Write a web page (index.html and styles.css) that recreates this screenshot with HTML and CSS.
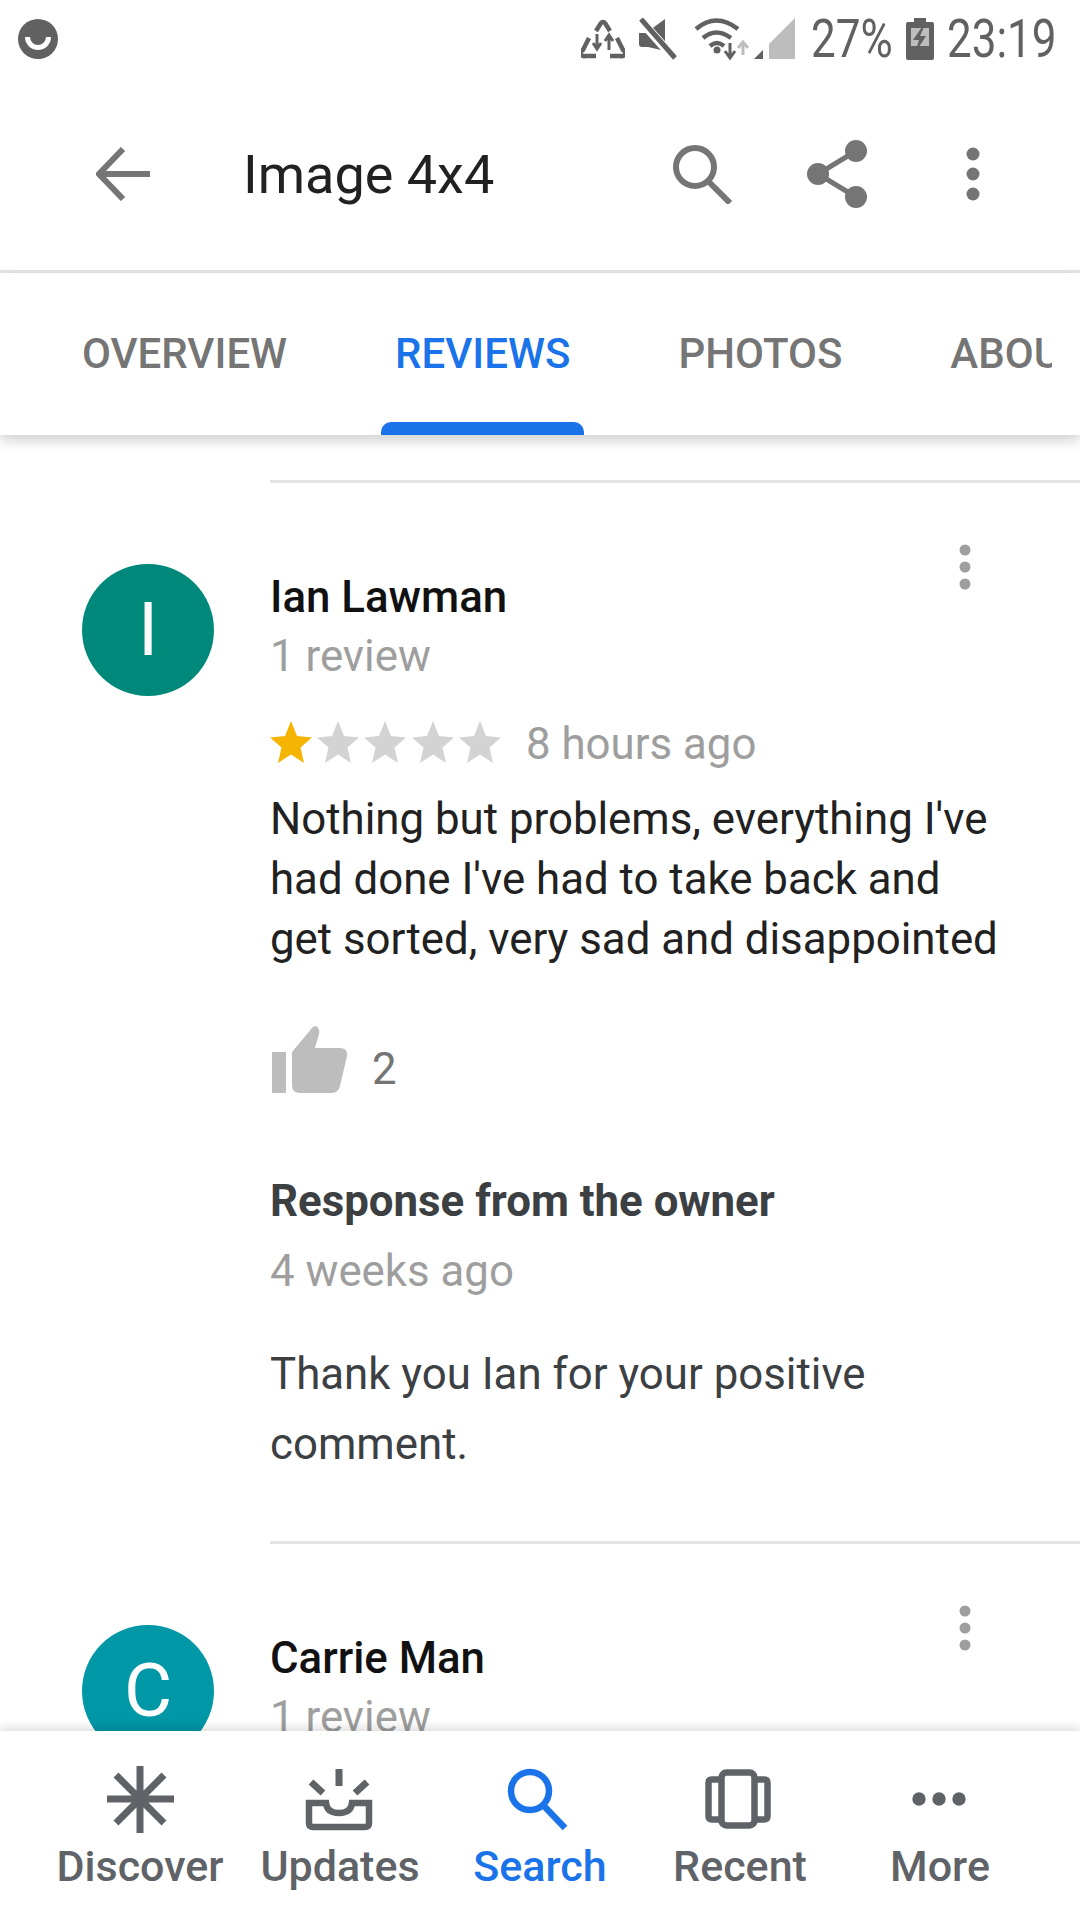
FILE: index.html
```html
<!DOCTYPE html>
<html lang="en">
  <head>
    <meta charset="UTF-8" />
    <title>Image 4x4 - Reviews</title>
    <link rel="stylesheet" href="styles.css">
  </head>
  <body>
    <div class="phone">
      <div class="status-bar">
        <svg class="status-app" width="44" height="44" viewBox="0 0 44 44">
          <circle cx="22" cy="22" r="20" fill="#616161"/>
          <path d="M9 20a13 13 0 0 0 26 0h-5a8 8 0 0 1-16 0z" fill="#fff"/>
        </svg>
        <div class="status-right">
          <svg class="s-recycle" width="44" height="42" viewBox="0 0 44 42" fill="none" stroke="#616161" stroke-width="4.500">
            <path d="M15 13l5-8a2.500 2.500 0 0 1 4 0l5 8"/>
            <path d="M8 20l-6 12a3 3 0 0 0 2 6h11"/>
            <path d="M36 20l6 12a3 3 0 0 1-2 6H29"/>
            <path d="M16 16v14M12 25l4 6 4-6M28 32V18M24 23l4-6 4 6" stroke-width="3"/>
          </svg>
          <svg class="s-mute" width="38" height="42" viewBox="0 0 38 42">
            <path d="M0 15h7L26 1v32L9 29H3q-3 0-3-3z" fill="#616161"/>
            <path d="M2 3l32 36" stroke="#fff" stroke-width="9"/>
            <path d="M2 1l34 39" stroke="#616161" stroke-width="5"/>
          </svg>
          <svg class="s-wifi" width="56" height="44" viewBox="0 0 56 44" fill="none" stroke="#616161" stroke-width="4.500">
            <path d="M2 12q20-17 42 0M9 21q13-11 28 0M16 29q7-6 14 0"/>
            <circle cx="23" cy="33" r="3.500" fill="#616161" stroke="none"/>
            <path d="M36 26v15M31 34l5 7 5-7" stroke-width="3"/>
            <path d="M49 38V25M44 31l5-6 5 6" stroke="#bdbdbd" stroke-width="3"/>
          </svg>
          <svg class="s-signal" width="42" height="42" viewBox="0 0 42 42">
            <path d="M0 41l9-9v9z" fill="#616161"/>
            <path d="M15 41V26L41 0v41z" fill="#bdbdbd"/>
          </svg>
          <span class="status-text pct">27%</span>
          <svg class="s-battery" width="28" height="42" viewBox="0 0 28 42">
            <path d="M8 0h12v4h6q2 0 2 2v34q0 2-2 2H2q-2 0-2-2V6q0-2 2-2h6z" fill="#616161"/>
            <rect x="5" y="10" width="18" height="18" fill="#bdbdbd"/>
            <path d="M16 9l-9 13h6l-4 13 11-17h-6l4-9z" fill="#616161"/>
          </svg>
          <span class="status-text clock">23:19</span>
        </div>
      </div>

      <div class="app-bar">
        <svg class="back-icon" width="54" height="54" viewBox="0 0 54 54" fill="none" stroke="#757575" stroke-width="6">
          <path d="M54 27H5M27 2L3 27l24 25"/>
        </svg>
        <div class="app-title">Image 4x4</div>
        <svg class="search-icon" width="60" height="60" viewBox="0 0 60 60" fill="none" stroke="#757575" stroke-width="6">
          <circle cx="23" cy="23" r="19"/>
          <path d="M36 37l22 22"/>
        </svg>
        <svg class="share-icon" width="60" height="68" viewBox="0 0 60 68" fill="#757575">
          <circle cx="49" cy="11" r="11"/>
          <circle cx="11" cy="34" r="11"/>
          <circle cx="49" cy="57" r="11"/>
          <path d="M49 11L11 34l38 23" fill="none" stroke="#757575" stroke-width="5"/>
        </svg>
        <svg class="more-icon" width="14" height="54" viewBox="0 0 14 54" fill="#757575">
          <circle cx="7" cy="7" r="6.500"/>
          <circle cx="7" cy="27" r="6.500"/>
          <circle cx="7" cy="47" r="6.500"/>
        </svg>
      </div>

      <div class="tabs">
        <div class="tab">OVERVIEW</div>
        <div class="tab active">REVIEWS</div>
        <div class="tab">PHOTOS</div>
        <div class="tab">ABOUT</div>
      </div>

      <div class="review-list">
        <div class="review first">
          <div class="avatar green">I</div>
          <div class="review-body">
            <div class="review-head">
              <div>
                <div class="reviewer">Ian Lawman</div>
                <div class="muted">1 review</div>
              </div>
              <svg class="kebab" width="12" height="46" viewBox="0 0 12 46" fill="#9e9e9e">
                <circle cx="6" cy="6" r="5.500"/>
                <circle cx="6" cy="23" r="5.500"/>
                <circle cx="6" cy="40" r="5.500"/>
              </svg>
            </div>
            <div class="rating">
              <svg class="stars" width="232" height="46" viewBox="0 0 232 46">
                <path d="M21 0l6 15 15 1.500-11.500 10 3.500 15.500-13-8.500-13 8.500 3.500-15.500L0 16.500 15 15z" fill="#f4b400"/>
                <path d="M68 0l6 15 15 1.500-11.500 10 3.500 15.500-13-8.500-13 8.500 3.500-15.500L47 16.500 62 15z" fill="#d3d3d3"/>
                <path d="M115 0l6 15 15 1.500-11.500 10 3.500 15.500-13-8.500-13 8.500 3.500-15.500L94 16.500 109 15z" fill="#d3d3d3"/>
                <path d="M163 0l6 15 15 1.500-11.500 10 3.500 15.500-13-8.500-13 8.500 3.500-15.500L142 16.500 157 15z" fill="#d3d3d3"/>
                <path d="M210 0l6 15 15 1.500-11.500 10 3.500 15.500-13-8.500-13 8.500 3.500-15.500L189 16.500 204 15z" fill="#d3d3d3"/>
              </svg>
              <span class="muted">8 hours ago</span>
            </div>
            <p class="review-text">Nothing but problems, everything I've had done I've had to take back and get sorted, very sad and disappointed</p>
            <div class="likes">
              <svg class="thumb" width="76" height="68" viewBox="0 0 76 68" fill="#bdbdbd">
                <rect x="0" y="27" width="14" height="41"/>
                <path d="M20 27L40 3q4-4 6 0 2 3 1 6l-4 14h25q8 0 7 8l-7 30q-2 7-8 7H28q-8 0-8-8z"/>
              </svg>
              <span class="like-count">2</span>
            </div>
            <div class="owner-title">Response from the owner</div>
            <div class="muted owner-date">4 weeks ago</div>
            <p class="owner-text">Thank you Ian for your positive comment.</p>
          </div>
        </div>

        <div class="review">
          <div class="avatar teal">C</div>
          <div class="review-body">
            <div class="review-head">
              <div>
                <div class="reviewer">Carrie Man</div>
                <div class="muted">1 review</div>
              </div>
              <svg class="kebab" width="12" height="46" viewBox="0 0 12 46" fill="#9e9e9e">
                <circle cx="6" cy="6" r="5.500"/>
                <circle cx="6" cy="23" r="5.500"/>
                <circle cx="6" cy="40" r="5.500"/>
              </svg>
            </div>
          </div>
        </div>
      </div>

      <div class="bottom-nav">
        <div class="nav-item">
          <svg width="70" height="70" viewBox="0 0 70 70" fill="none" stroke="#5f6368" stroke-width="7">
            <path d="M35 1v67M2 34h67M11 10l48 48M59 10L11 58"/>
          </svg>
          <span>Discover</span>
        </div>
        <div class="nav-item">
          <svg width="70" height="70" viewBox="0 0 70 70" fill="none" stroke="#5f6368" stroke-width="7">
            <path d="M34 4v17M6 17l12 11M62 17L50 28"/>
            <path d="M4 38h17q1 10 13 10t13-10h17v20q0 4-4 4H8q-4 0-4-4z" stroke-width="6.500"/>
          </svg>
          <span>Updates</span>
        </div>
        <div class="nav-item current">
          <svg width="70" height="70" viewBox="0 0 70 70" fill="none" stroke="#1a73e8" stroke-width="6.500">
            <circle cx="25" cy="26" r="19"/>
            <path d="M39 41l21 22"/>
          </svg>
          <span>Search</span>
        </div>
        <div class="nav-item">
          <svg width="70" height="70" viewBox="0 0 70 70" fill="none" stroke="#5f6368" stroke-width="6.500">
            <rect x="16.500" y="7.500" width="33" height="53" rx="5"/>
            <path d="M16 14.500H7q-3.500 0-3.500 3.500v33q0 3.500 3.500 3.500h9M50 14.500h9q3.500 0 3.500 3.500v33q0 3.500-3.500 3.500h-9"/>
          </svg>
          <span>Recent</span>
        </div>
        <div class="nav-item">
          <svg width="70" height="70" viewBox="0 0 70 70" fill="#5f6368">
            <circle cx="14" cy="34" r="6.700"/>
            <circle cx="34" cy="34" r="6.700"/>
            <circle cx="54" cy="34" r="6.700"/>
          </svg>
          <span>More</span>
        </div>
      </div>
    </div>
  </body>
</html>
```

FILE: styles.css
```css
* {
  box-sizing: border-box;
}

body {
  margin: 0;
  font-family: Roboto, "Liberation Sans", sans-serif;
  background: white;
}

.phone {
  width: 1080px;
  height: 1920px;
  display: flex;
  flex-direction: column;
  overflow: hidden;
}

.status-bar {
  height: 80px;
  flex: none;
  display: flex;
  justify-content: space-between;
  align-items: center;
  padding: 0 23px 2px 16px;
}

.status-right {
  display: flex;
  align-items: center;
}

.s-mute {
  margin-left: 14px;
}

.s-wifi {
  margin-left: 17px;
}

.s-signal {
  margin-left: 4px;
}

.s-battery {
  margin: 0 13px 0 14px;
}

/* the status bar font is narrower than Roboto */
.status-text {
  display: inline-block;
  font-size: 53px;
  line-height: 60px;
  color: #616161;
  transform: scaleX(0.83);
  transform-origin: left;
}

.pct {
  margin-left: 15px;
  margin-right: -17px;
}

.clock {
  margin-right: -22px;
}

.app-bar {
  height: 193px;
  flex: none;
  display: flex;
  align-items: center;
  padding: 0 0 2px 96px;
  border-bottom: 3px solid #e4e4e4;
}

.app-title {
  margin-left: 93px;
  width: 429px;
  font-size: 54px;
  color: #212121;
}

.share-icon {
  margin-left: 75px;
}

.more-icon {
  margin-left: 99px;
}

.tabs {
  position: relative;
  z-index: 1;
  height: 162px;
  flex: none;
  display: flex;
  padding-left: 82px;
  background: white;
  box-shadow: 0 6px 12px rgba(0, 0, 0, 0.18);
}

.tab {
  position: relative;
  flex: none;
  margin-right: 108px;
  padding-top: 56px;
  font-size: 42px;
  font-weight: 500;
  color: #757575;
  white-space: nowrap;
}

.tab:last-child {
  width: 102px;
  margin-right: 0;
  overflow: hidden;
}

.tab.active {
  color: #1a73e8;
}

.tab.active::after {
  content: "";
  position: absolute;
  left: -14px;
  right: -14px;
  bottom: 0;
  height: 13px;
  background: #1a73e8;
  border-radius: 10px 10px 0 0;
}

.review-list {
  flex: 1;
  min-height: 0;
  overflow: hidden;
  padding-top: 45px;
}

.review {
  display: flex;
  padding-left: 82px;
}

.avatar {
  flex: none;
  width: 132px;
  height: 132px;
  margin: 84px 56px 0 0;
  border-radius: 50%;
  color: white;
  font-size: 74px;
  line-height: 132px;
  text-align: center;
}

.green {
  background: #00897b;
}

.teal {
  background: #0097a7;
}

.review-body {
  flex: 1;
  padding: 84px 70px 0 0;
  border-top: 3px solid #e4e4e4;
  font-size: 43.8px;
}

.review-head {
  display: flex;
  justify-content: space-between;
  align-items: flex-start;
}

.kebab {
  margin: -23px 39px 0 0;
}

.reviewer {
  font-weight: 500;
  line-height: 60px;
  color: #111;
}

.muted {
  line-height: 58px;
  color: #9e9e9e;
}

.rating {
  display: flex;
  align-items: center;
  margin-top: 30px;
  gap: 24px;
}

.stars {
  display: block;
}

.review-text {
  margin: 0;
  padding-top: 16px;
  line-height: 60px;
  color: #212121;
}

.likes {
  display: flex;
  align-items: center;
  margin: 66px 0 0 2px;
  gap: 24px;
}

.thumb {
  margin: -10px 0 10px;
}

.like-count {
  color: #757575;
}

.owner-title {
  margin-top: 68px;
  font-weight: 700;
  line-height: 60px;
  color: #3c4043;
}

.owner-date {
  margin-top: 11px;
}

.owner-text {
  margin: 39px 0 0;
  padding-bottom: 62px;
  line-height: 70px;
  color: #3c4043;
}

.bottom-nav {
  position: relative;
  z-index: 1;
  height: 189px;
  flex: none;
  display: flex;
  justify-content: center;
  padding-top: 34px;
  background: white;
  box-shadow: 0 -3px 10px rgba(0, 0, 0, 0.15);
}

.nav-item {
  flex: 0 0 200px;
  display: flex;
  flex-direction: column;
  align-items: center;
  font-size: 43px;
  font-weight: 500;
  color: #5f6368;
}

.nav-item span {
  margin-top: 6px;
}

.nav-item.current {
  color: #1a73e8;
}
```
